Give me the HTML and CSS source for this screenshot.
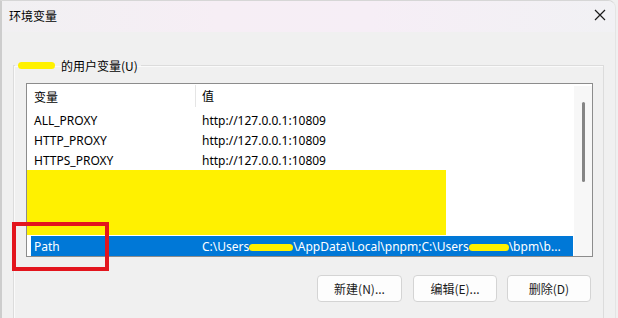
FILE: index.html
```html
<!DOCTYPE html>
<html lang="zh-CN">

<head>
  <meta charset="UTF-8" />
  <meta name="viewport" content="width=device-width, initial-scale=1.0" />
  <title>环境变量</title>
  <link rel="stylesheet" href="styles.css">
</head>

<body>
  <div class="window">
    <div class="titlebar">
      <span class="title">环境变量</span>
      <span class="close">
        <svg width="12" height="12" viewBox="0 0 12 12">
          <path d="M1 1 L11 11 M11 1 L1 11" stroke="#1a1a1a" stroke-width="1.2" fill="none" />
        </svg>
      </span>
    </div>

    <div class="content">
      <fieldset class="group">
        <legend><span class="redact-name"></span>的用户变量(U)</legend>

        <div class="list">
          <div class="list-main">
            <div class="list-head">
              <div class="col-name">变量</div>
              <div class="col-value">值</div>
            </div>
            <div class="row">
              <div class="col-name">ALL_PROXY</div>
              <div class="col-value">http://127.0.0.1:10809</div>
            </div>
            <div class="row">
              <div class="col-name">HTTP_PROXY</div>
              <div class="col-value">http://127.0.0.1:10809</div>
            </div>
            <div class="row">
              <div class="col-name">HTTPS_PROXY</div>
              <div class="col-value">http://127.0.0.1:10809</div>
            </div>
            <div class="redact-block"></div>
            <div class="row selected">
              <div class="col-name">Path</div>
              <div class="col-value">C:\Users<span class="redact-user"></span>\AppData\Local\pnpm;C:\Users<span class="redact-user short"></span>\bpm\b...</div>
            </div>
          </div>
          <div class="scrollbar">
            <div class="thumb"></div>
          </div>
        </div>

        <div class="buttons">
          <button class="wide">新建(N)...</button>
          <button>编辑(E)...</button>
          <button>删除(D)</button>
        </div>
      </fieldset>
    </div>

    <div class="highlight"></div>
  </div>
</body>

</html>
```

FILE: styles.css
```css
body {
  margin: 0;
  background-color: #f0f0f0;
  font-family: "Segoe UI", "Noto Sans", "Noto Sans CJK SC", sans-serif;
  font-size: 12px;
  color: #000;
  overflow: hidden;
}

.window {
  position: relative;
  width: 616px;
  height: 318px;
  border-left: 2px solid #cdcdcd;
  border-top: 1px solid #d6d6d6;
  border-right: 1px solid #e4e4e4;
  border-top-right-radius: 8px;
  box-sizing: border-box;
  background-color: #f0f0f0;
  overflow: hidden;
}

.titlebar {
  height: 31px;
  display: flex;
  align-items: center;
  justify-content: space-between;
  padding: 0 9px 0 7px;
  background: linear-gradient(90deg, #f1f0f2 0%, #f6eef5 35%, #f6eef6 60%, #f1f1f4 100%);
}

.title {
  font-family: "Noto Sans CJK SC", sans-serif;
  font-size: 12px;
  margin-top: -2px;
}

.close {
  display: flex;
  margin-top: -3px;
}

.content {
  padding: 25px 11px 0 11px;
}

.group {
  margin: 0;
  padding: 9px 10px 0 12px;
  border: 1px solid #dcdcdc;
  border-bottom: none;
  box-shadow: inset 1px 1px 0 #fafafa;
  height: 262px;
  box-sizing: border-box;
}

.group legend {
  padding: 0 3px 0 3px;
  margin-left: -11px;
  font-family: "Noto Sans CJK SC", sans-serif;
  font-size: 12px;
  display: flex;
  align-items: center;
}

.redact-name {
  display: inline-block;
  width: 37px;
  height: 7px;
  border-radius: 4px;
  background-color: #fff100;
  margin-right: 6px;
}

.list {
  display: flex;
  height: 174px;
  border: 1px solid #8c8c8c;
  background-color: #fff;
  box-sizing: border-box;
}

.list-main {
  flex: 1;
  display: flex;
  flex-direction: column;
}

.list-head {
  display: flex;
  height: 22px;
  align-items: center;
  margin: 1px 0 3px 0;
  font-family: "Noto Sans CJK SC", sans-serif;
}

.list-head .col-name {
  width: 168px;
  padding-left: 7px;
}

.list-head .col-value {
  border-left: 1px solid #e5e5e5;
  height: 22px;
  line-height: 22px;
  padding-left: 6px;
}

.row {
  display: flex;
  height: 20px;
  align-items: center;
  margin: 0 1px 0 4px;
}

.col-name {
  box-sizing: border-box;
}

.row .col-name {
  width: 171px;
  padding-left: 3px;
}

.row .col-value {
  white-space: nowrap;
  overflow: hidden;
}

.redact-block {
  width: 419px;
  height: 65px;
  margin-top: 0;
  background-color: #fff100;
}

.row.selected {
  margin-top: 1px;
  background-color: #0078d7;
  color: #fff;
}

.redact-user {
  display: inline-block;
  width: 44px;
  height: 7px;
  border-radius: 4px;
  background-color: #fff100;
  vertical-align: middle;
}

.redact-user.short {
  width: 40px;
}

.scrollbar {
  width: 18px;
  margin-top: 2px;
  background-color: #f7f7f7;
  display: flex;
  justify-content: center;
  padding-top: 16px;
}

.thumb {
  width: 3px;
  height: 80px;
  border-radius: 2px;
  background-color: #858585;
}

.buttons {
  display: flex;
  justify-content: flex-end;
  gap: 10px;
  margin-top: 18px;
  padding-right: 2px;
}

.buttons button {
  width: 84px;
  height: 27px;
  border: 1px solid #d4d4d4;
  border-radius: 4px;
  background-color: #fdfdfd;
  font-family: "Noto Sans CJK SC", sans-serif;
  font-size: 12px;
  color: #1a1a1a;
  padding: 0;
}

.buttons button.wide {
  width: 85px;
  margin-right: 1px;
}

.highlight {
  position: absolute;
  left: 10px;
  top: 221px;
  width: 97px;
  height: 49px;
  border: 4px solid #e3151d;
  box-sizing: border-box;
}
```
